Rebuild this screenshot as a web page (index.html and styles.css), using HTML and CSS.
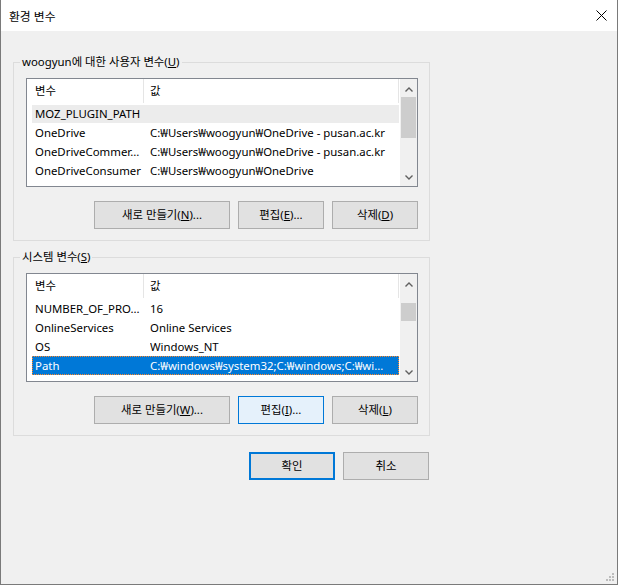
FILE: index.html
```html
<!DOCTYPE html>
<html lang="ko">
<head>
<meta charset="utf-8">
<title>환경 변수</title>
<link rel="stylesheet" href="styles.css">
</head>
<body>
<div class="window">
  <div class="titlebar">
    <span class="title">환경 변수</span>
    <svg class="close" width="11" height="11" viewBox="0 0 11 11"><path d="M0.5 0.5 L10.5 10.5 M10.5 0.5 L0.5 10.5" stroke="#000" stroke-width="1" fill="none"/></svg>
  </div>
  <div class="content">
    <fieldset class="group">
      <legend>woogyun에 대한 사용자 변수(<u>U</u>)</legend>
      <div class="list">
        <div class="list-body">
          <div class="header"><span class="hname">변수</span><span class="hvalue">값</span></div>
          <div class="row hover"><span class="name">MOZ_PLUGIN_PATH</span><span class="value"></span></div>
          <div class="row"><span class="name">OneDrive</span><span class="value">C:₩Users₩woogyun₩OneDrive - pusan.ac.kr</span></div>
          <div class="row"><span class="name">OneDriveCommer...</span><span class="value">C:₩Users₩woogyun₩OneDrive - pusan.ac.kr</span></div>
          <div class="row"><span class="name">OneDriveConsumer</span><span class="value">C:₩Users₩woogyun₩OneDrive</span></div>
        </div>
        <div class="scrollbar">
          <div class="sb-btn sb-up"><svg width="8" height="5" viewBox="0 0 8 5"><path d="M0.5 4.5 L4 1 L7.5 4.5" stroke="#606060" stroke-width="1.4" fill="none"/></svg></div>
          <div class="sb-track"><div class="thumb thumb-user"></div></div>
          <div class="sb-btn sb-down"><svg width="8" height="5" viewBox="0 0 8 5"><path d="M0.5 0.5 L4 4 L7.5 0.5" stroke="#606060" stroke-width="1.4" fill="none"/></svg></div>
        </div>
      </div>
      <div class="buttons">
        <button class="btn wide">새로 만들기(<u>N</u>)...</button>
        <button class="btn">편집(<u>E</u>)...</button>
        <button class="btn">삭제(<u>D</u>)</button>
      </div>
    </fieldset>

    <fieldset class="group group-sys">
      <legend>시스템 변수(<u>S</u>)</legend>
      <div class="list">
        <div class="list-body">
          <div class="header"><span class="hname">변수</span><span class="hvalue">값</span></div>
          <div class="row"><span class="name">NUMBER_OF_PRO...</span><span class="value">16</span></div>
          <div class="row"><span class="name">OnlineServices</span><span class="value">Online Services</span></div>
          <div class="row"><span class="name">OS</span><span class="value">Windows_NT</span></div>
          <div class="row selected"><span class="name">Path</span><span class="value">C:₩windows₩system32;C:₩windows;C:₩wi...</span></div>
        </div>
        <div class="scrollbar">
          <div class="sb-btn sb-up"><svg width="8" height="5" viewBox="0 0 8 5"><path d="M0.5 4.5 L4 1 L7.5 4.5" stroke="#606060" stroke-width="1.4" fill="none"/></svg></div>
          <div class="sb-track"><div class="thumb thumb-sys"></div></div>
          <div class="sb-btn sb-down"><svg width="8" height="5" viewBox="0 0 8 5"><path d="M0.5 0.5 L4 4 L7.5 0.5" stroke="#606060" stroke-width="1.4" fill="none"/></svg></div>
        </div>
      </div>
      <div class="buttons">
        <button class="btn wide">새로 만들기(<u>W</u>)...</button>
        <button class="btn focused">편집(<u>I</u>)...</button>
        <button class="btn">삭제(<u>L</u>)</button>
      </div>
    </fieldset>

    <div class="dialog-buttons">
      <button class="btn default">확인</button>
      <button class="btn">취소</button>
    </div>
  </div>
  <svg class="grip" width="8" height="8" viewBox="0 0 8 8">
    <rect x="6" y="0" width="2" height="2" fill="#bcbcbc"/>
    <rect x="3" y="3" width="2" height="2" fill="#bcbcbc"/>
    <rect x="6" y="3" width="2" height="2" fill="#bcbcbc"/>
    <rect x="0" y="6" width="2" height="2" fill="#bcbcbc"/>
    <rect x="3" y="6" width="2" height="2" fill="#bcbcbc"/>
    <rect x="6" y="6" width="2" height="2" fill="#bcbcbc"/>
  </svg>
</div>
</body>
</html>
```

FILE: styles.css
```css
* { box-sizing: border-box; }

html, body {
  margin: 0;
  padding: 0;
  background: #f0f0f0;
}

body {
  font-family: "Noto Sans", "Noto Sans CJK KR", sans-serif;
  font-size: 11.4px;
  line-height: 16px;
  color: #000;
}

.window {
  position: relative;
  width: 618px;
  height: 585px;
  background: #f0f0f0;
  border: 1px solid #7a7a7a;
  border-top: none;
  display: flex;
  flex-direction: column;
}

.titlebar {
  height: 31px;
  flex: none;
  background: #fff;
  display: flex;
  align-items: center;
  justify-content: space-between;
  padding: 0 10px 0 8px;
}

.title {
  font-size: 11.8px;
}

.close {
  display: block;
}

.content {
  padding: 23px 0 0 12px;
}

.group {
  width: 417px;
  margin: 0;
  padding: 8px 11px 11px 12px;
  border: 1px solid #dcdcdc;
  min-width: 0;
}

.group-sys {
  margin-top: 8px;
}

.group legend {
  padding: 0 2px;
  margin-left: -6px;
  line-height: 16px;
}

.list {
  width: 392px;
  height: 109px;
  border: 1px solid #828790;
  background: #fff;
  display: flex;
  overflow: hidden;
}

.list-body {
  flex: 1;
  min-width: 0;
  overflow: hidden;
}

.header {
  height: 25px;
  display: flex;
}

.hname,
.hvalue {
  height: 24px;
  line-height: 24px;
  border-right: 1px solid #e5e5e5;
}

.hname {
  width: 117px;
  padding-left: 8px;
}

.hvalue {
  width: 255px;
  padding-left: 6px;
}

.row {
  display: flex;
  height: 19px;
  line-height: 19px;
  margin-left: 5px;
  width: 367px;
  white-space: nowrap;
}

.row .name {
  width: 118px;
  flex: none;
  padding: 0 6px 0 3px;
  overflow: hidden;
  text-overflow: ellipsis;
}

.row .value {
  flex: 1;
  min-width: 0;
  padding-right: 4px;
  overflow: hidden;
  text-overflow: ellipsis;
}

.row.hover {
  background: #ececec;
  box-shadow: inset 0 1px 0 #fff;
}

.row.selected {
  background: #0078d7;
  color: #fff;
  outline: 1px dotted #ff8728;
  outline-offset: -1px;
}

.scrollbar {
  width: 17px;
  flex: none;
  background: #f0f0f0;
  display: flex;
  flex-direction: column;
}

.sb-btn {
  height: 17px;
  flex: none;
  display: flex;
  justify-content: center;
}

.sb-btn svg { display: block; }

.sb-up {
  align-items: flex-start;
  padding-top: 8px;
}

.sb-down {
  align-items: flex-start;
  padding-top: 6px;
}

.sb-track {
  flex: 1;
  padding: 0 1px;
}

.thumb {
  background: #cdcdcd;
}

.thumb-user {
  margin-top: 1px;
  height: 41px;
}

.thumb-sys {
  margin-top: 12px;
  height: 18px;
}

.buttons {
  display: flex;
  justify-content: flex-end;
  gap: 8px;
  margin-top: 14px;
}

.btn {
  width: 86px;
  height: 28px;
  padding: 0;
  margin: 0;
  border: 1px solid #adadad;
  background: #e1e1e1;
  font-family: "Noto Sans", "Noto Sans CJK KR", sans-serif;
  font-size: 11.4px;
  line-height: 16px;
  color: #000;
  display: flex;
  align-items: center;
  justify-content: center;
  white-space: nowrap;
}

.btn.wide {
  width: 136px;
}

.btn.focused {
  border-color: #0078d7;
  background: #e5f1fb;
}

.btn.default {
  border: 2px solid #0078d7;
}

.dialog-buttons {
  width: 417px;
  display: flex;
  justify-content: flex-end;
  gap: 8px;
  margin-top: 16px;
  padding-right: 1px;
}

.grip {
  position: absolute;
  right: 3px;
  bottom: 3px;
  display: block;
}
```
